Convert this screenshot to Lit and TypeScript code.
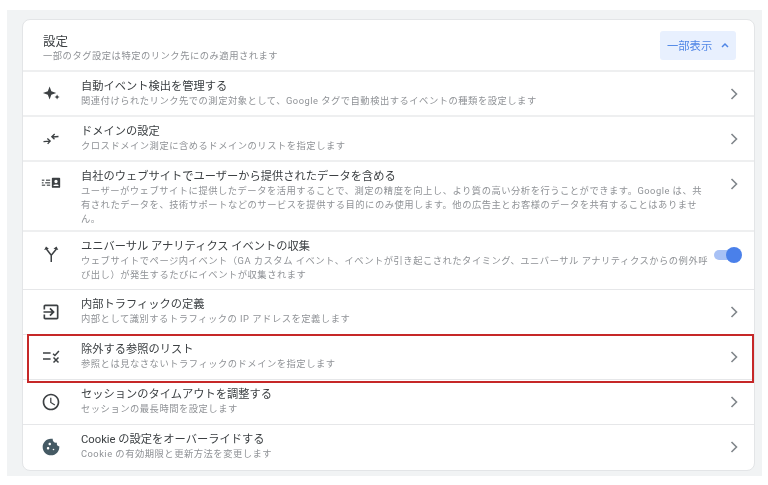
import { LitElement, html, css, svg } from "lit";
import { customElement } from "lit/decorators.js";

const ic = (body: unknown, size = 24) => html`<svg class="ico" width=${size} height=${size} viewBox="0 0 24 24" fill="#3c4043">${body}</svg>`;

const icons: Record<string, unknown> = {
  spark: ic(svg`<path d="M10.300 3 12.400 8.800 18.300 10.800 12.400 12.800 10.300 18.700 8.200 12.800 2.300 10.800 8.200 8.800Z"/><path d="M19.300 12.500l1 2.100 2.100 1-2.100 1-1 2.100-1-2.100-2.100-1 2.100-1Z"/>`),
  merge: ic(svg`<g fill="none" stroke="#3c4043" stroke-width="1.600"><path d="M3 15.200 10.500 14.600M7.600 11.500l3.400 3-3 3.400"/><path d="M21 9 13.500 9.600M16.400 6l-3.400 3.200 3.200 3.200"/></g>`),
  data: ic(svg`<g transform="translate(0 -1.500)"><path d="M14 6h8a1 1 0 0 1 1 1v10a1 1 0 0 1-1 1h-8a1 1 0 0 1-1-1V7a1 1 0 0 1 1-1Zm4 2.500a2 2 0 1 0 0 4 2 2 0 0 0 0-4ZM15 16h6v-1.200c-1-1-5-1-6 0Z" fill-rule="evenodd"/><path fill-opacity=".75" d="M1 8h3v1.800H1zM6 8h5v1.800H6zM1 11h2v1.800H1zM5 11h6v1.800H5zM1 14h4v1.800H1zM7 14h4v1.800H7z"/></g>`),
  fork: ic(svg`<g fill="none" stroke="#3c4043" stroke-width="1.800"><path d="M12.300 21.500V13.500L6.500 6M12.300 13.500 18.500 6"/></g><path d="M3.800 7.300 6 3l3.500 2.700ZM15 5.700 18.600 3l2.200 4.300Z"/>`),
  exit: ic(svg`<path d="M10.090 15.590 11.500 17l5-5-5-5-1.410 1.410L12.670 11H3v2h9.670l-2.580 2.590zM19 3H5c-1.110 0-2 .9-2 2v4h2V5h14v14H5v-4H3v4c0 1.100.89 2 2 2h14c1.100 0 2-.9 2-2V5c0-1.100-.9-2-2-2z"/>`),
  exclude: ic(svg`<path d="M2.400 6.200h9.100v2H2.400zM2.400 13.400h9.100v2H2.400z"/><path fill="none" stroke="#3c4043" stroke-width="1.800" d="M14.500 8l2.200 2.200L21.500 4.800M15 12.500l6 6M21 12.500l-6 6"/>`),
  clock: ic(svg`<path d="M11.990 2C6.470 2 2 6.480 2 12s4.470 10 9.990 10C17.520 22 22 17.520 22 12S17.520 2 11.990 2zM12 20c-4.420 0-8-3.580-8-8s3.580-8 8-8 8 3.580 8 8-3.580 8-8 8zm.5-13H11v6l5.250 3.150.75-1.230-4.500-2.670z"/>`),
  cookie: ic(svg`<path d="M21.950 10.990c-1.790-.03-3.700-1.950-2.680-4.220-2.980 1-5.770-1.590-5.190-4.560C6.950.71 2 6.580 2 12c0 5.520 4.480 10 10 10 5.890 0 10.540-5.080 9.950-11.010zM8.500 15c-.83 0-1.500-.67-1.500-1.500S7.670 12 8.500 12s1.500.67 1.500 1.500S9.330 15 8.500 15zm2-5C9.670 10 9 9.330 9 8.500S9.670 7 10.500 7s1.500.67 1.500 1.500-.67 1.500-1.500 1.500zm4.500 6c-.55 0-1-.45-1-1s.45-1 1-1 1 .45 1 1-.45 1-1 1z" fill="#455a64"/>`),
};

interface Row { icon: string; title: string; sub: unknown; cls?: string; toggle?: boolean; mark?: boolean }

const rows: Row[] = [
  { icon: "spark", cls: "thick", title: "自動イベント検出を管理する", sub: "関連付けられたリンク先での測定対象として、Google タグで自動検出するイベントの種類を設定します" },
  { icon: "merge", cls: "thick", title: "ドメインの設定", sub: "クロスドメイン測定に含めるドメインのリストを指定します" },
  { icon: "data", cls: "thick three", title: "自社のウェブサイトでユーザーから提供されたデータを含める", sub: html`ユーザーがウェブサイトに提供したデータを活用することで、測定の精度を向上し、より質の高い分析を行うことができます。Google は、共<br>有されたデータを、技術サポートなどのサービスを提供する目的にのみ使用します。他の広告主とお客様のデータを共有することはありませ<br>ん。` },
  { icon: "fork", cls: "two", toggle: true, title: "ユニバーサル アナリティクス イベントの収集", sub: html`ウェブサイトでページ内イベント（GA カスタム イベント、イベントが引き起こされたタイミング、ユニバーサル アナリティクスからの例外呼<br>び出し）が発生するたびにイベントが収集されます` },
  { icon: "exit", title: "内部トラフィックの定義", sub: "内部として識別するトラフィックの IP アドレスを定義します" },
  { icon: "exclude", mark: true, title: "除外する参照のリスト", sub: "参照とは見なさないトラフィックのドメインを指定します" },
  { icon: "clock", title: "セッションのタイムアウトを調整する", sub: "セッションの最長時間を設定します" },
  { icon: "cookie", title: "Cookie の設定をオーバーライドする", sub: "Cookie の有効期限と更新方法を変更します" },
];

@customElement("app-root")
export class AppRoot extends LitElement {
  static styles = css`
    :host {
      display: block;
      width: 768px;
      height: 485px;
      background: #fff;
      font-family: Roboto, "Noto Sans CJK JP", sans-serif;
      overflow: hidden;
    }
    .panel {
      margin: 10px 6px 0 7px;
      height: 466px;
      box-sizing: border-box;
      background: #f1f3f4;
      padding: 9px 7px 0 15px;
      filter: blur(0.35px);
    }
    .card {
      background: #fff;
      border: 1px solid #e3e5e7;
      border-radius: 8px;
      height: 452px;
      box-sizing: border-box;
      display: flex;
      flex-direction: column;
    }
    .head {
      height: 52px;
      flex: none;
      box-sizing: border-box;
      border-bottom: 2px solid #eeeff0;
      display: flex;
      align-items: center;
      justify-content: space-between;
      padding: 0 18px 0 20px;
    }
    .head-text { padding-top: 6px; }
    .head-title {
      font-size: 12.500px;
      line-height: 15px;
      color: #3c4043;
    }
    .head-sub, .sub {
      font-size: 9.300px;
      letter-spacing: 0.5px;
      line-height: 14px;
      color: #8f9296;
      white-space: nowrap;
    }
    .btn {
      width: 76px;
      height: 29px;
      box-sizing: border-box;
      background: #e8f0fe;
      border-radius: 3px;
      color: #4f86e6;
      font-size: 11.300px;
      display: flex;
      align-items: center;
      gap: 9px;
      padding-left: 7px;
    }
    .row {
      position: relative;
      flex: none;
      height: 45px;
      box-sizing: border-box;
      display: grid;
      grid-template-columns: 58px 1fr 34px;
      border-bottom: 1px solid #e6e7e9;
      padding-top: 8px;
    }
    .row:last-child { border-bottom: 0; }
    .row.thick { border-bottom: 2px solid #eeeff0; }
    .row.three { height: 70px; }
    .row.two { height: 58px; }
    .ic {
      display: flex;
      justify-content: center;
      padding: 4px 2px 0 0;
    }
    .ico { display: block; width: 20px; height: 20px; }
    .title {
      font-size: 11.250px;
      line-height: 14px;
      color: #3c4043;
      white-space: nowrap;
    }
    .chev {
      display: block;
      padding-top: 8px;
    }
    .toggle {
      position: relative;
      display: block;
      width: 26px;
      height: 10px;
      margin: 10px 0 0 -6px;
      border-radius: 5px;
      background: #a8c1f5;
    }
    .toggle::after {
      content: "";
      position: absolute;
      right: -2px;
      top: -3px;
      width: 16px;
      height: 16px;
      border-radius: 50%;
      background: #4a80ea;
    }
    .mark {
      position: absolute;
      left: 4px;
      right: 0;
      top: -1px;
      bottom: -4px;
      border: 2px solid #c62828;
      pointer-events: none;
    }
  `;

  render() {
    return html`
      <div class="panel" lang="ja">
        <div class="card">
          <div class="head">
            <div class="head-text">
              <div class="head-title">設定</div>
              <div class="head-sub">一部のタグ設定は特定のリンク先にのみ適用されます</div>
            </div>
            <div class="btn">一部表示
              <svg width="8" height="6" viewBox="0 0 8 6"><path d="M1 5 4 2l3 3" fill="none" stroke="#4f86e6" stroke-width="1.500"/></svg>
            </div>
          </div>
          ${rows.map((r) => html`
            <div class="row ${r.cls ?? ""}">
              <div class="ic">${icons[r.icon]}</div>
              <div>
                <div class="title">${r.title}</div>
                <div class="sub">${r.sub}</div>
              </div>
              ${r.toggle
                ? html`<span class="toggle"></span>`
                : html`<svg class="chev" width="30" height="12" viewBox="0 0 30 12"><path d="M11.500 1 16.500 6l-5 5" fill="none" stroke="#80868b" stroke-width="1.600" /></svg>`}
              ${r.mark ? html`<div class="mark"></div>` : ""}
            </div>`)}
        </div>
      </div>
    `;
  }
}
